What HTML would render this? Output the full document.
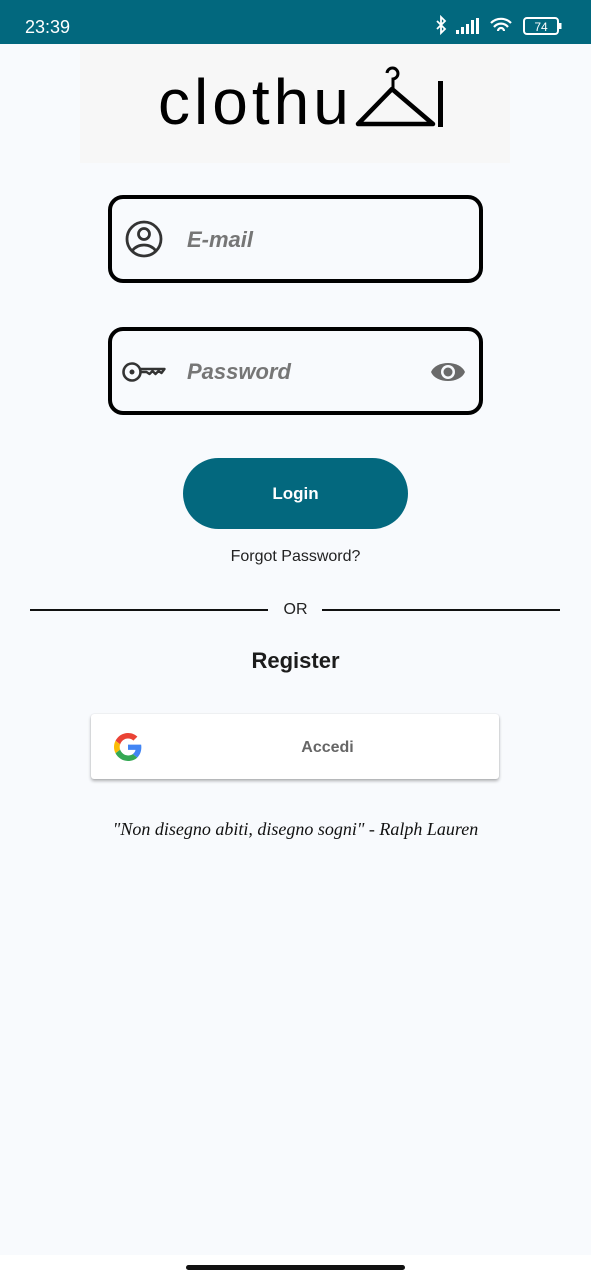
<!DOCTYPE html>
<html><head><meta charset="utf-8"><style>
*{margin:0;padding:0;box-sizing:border-box}
body{width:591px;height:1280px;background:#f8fafd;font-family:"Liberation Sans",Roboto,sans-serif;position:relative;overflow:hidden}
.a{position:absolute}
.sb{left:0;top:0;width:591px;height:44px;background:#02687e;color:#fff}
.field{left:108px;width:375px;height:88px;border:4px solid #000;border-radius:15px}
.ph{font-size:22px;font-weight:bold;font-style:italic;color:#767676}
</style></head><body>
<div class="a sb">
<div class="a" style="left:25px;top:17px;font-size:18px;">23:39</div>
<svg class="a" style="left:434px;top:15px" width="130" height="22" viewBox="0 0 130 22">
<path d="M3 6l8 8-4 4V2l4 4-8 8" fill="none" stroke="#fff" stroke-width="1.8"/>
<rect x="22" y="15" width="3" height="4" fill="#fff"/><rect x="27" y="12" width="3" height="7" fill="#fff"/><rect x="32" y="9" width="3" height="10" fill="#fff"/><rect x="37" y="5" width="3" height="14" fill="#fff"/><rect x="42" y="3" width="3" height="16" fill="#fff"/>
<path d="M57 8a14 14 0 0 1 20 0M60 12a9 9 0 0 1 14 0M64 16a3 3 0 0 1 6 0" fill="none" stroke="#fff" stroke-width="2.2"/>
<rect x="90" y="3" width="34" height="16" rx="3" fill="none" stroke="#fff" stroke-width="2"/>
<rect x="125" y="8" width="2.5" height="6" fill="#fff"/>
<text x="107" y="16" font-size="12" fill="#fff" text-anchor="middle" font-family="Liberation Sans">74</text>
</svg>
</div>
<div class="a" style="left:80px;top:44px;width:430px;height:119px;background:#f7f7f7"></div>
<div class="a" style="left:158px;top:65px;font-size:64px;line-height:74px;color:#000;letter-spacing:4px">clothu</div>
<svg class="a" style="left:326px;top:64px" width="122" height="66" viewBox="0 0 122 66">
<path d="M61 9a5.5 5.5 0 1 1 6 6v10" fill="none" stroke="#000" stroke-width="3"/>
<path d="M66 25L32 60h75z" fill="none" stroke="#000" stroke-width="4.5" stroke-linejoin="round"/>
<rect x="112" y="17" width="5" height="46" fill="#000"/>
</svg>
<div class="a field" style="top:195px"></div>
<svg class="a" style="left:124px;top:219px" width="40" height="40" viewBox="0 0 40 40"><circle cx="20" cy="20" r="17" fill="none" stroke="#333" stroke-width="2.8"/><circle cx="20" cy="15" r="5.5" fill="none" stroke="#333" stroke-width="2.8"/><path d="M8 32c6-8 18-8 24 0" fill="none" stroke="#333" stroke-width="2.8"/></svg>
<div class="a ph" style="left:187px;top:227px">E-mail</div>
<div class="a field" style="top:327px"></div>
<svg class="a" style="left:121px;top:360px" width="48" height="24" viewBox="0 0 48 24"><circle cx="11" cy="12" r="8.5" fill="none" stroke="#333" stroke-width="2.6"/><circle cx="11" cy="12" r="2.5" fill="#333"/><path d="M19.5 9h24l-3 4-3-2-3 3-3-3-3 3-3-2h-6" fill="none" stroke="#333" stroke-width="2.4" stroke-linejoin="round"/></svg>
<div class="a ph" style="left:187px;top:359px">Password</div>
<svg class="a" style="left:430px;top:359px" width="36" height="26" viewBox="0 0 36 26"><path d="M1 13C6 1 30 1 35 13C30 25 6 25 1 13z" fill="#6a6a6a"/><circle cx="18" cy="13" r="7" fill="#f8fafd"/><circle cx="18" cy="13" r="4.5" fill="#6a6a6a"/></svg>
<div class="a" style="left:183px;top:458px;width:225px;height:71px;border-radius:36px;background:#03687e;color:#fff;font-weight:bold;font-size:17px;text-align:center;line-height:71px">Login</div>
<div class="a" style="left:0;width:591px;top:548px;text-align:center;font-size:16px;color:#222">Forgot Password?</div>
<div class="a" style="left:30px;top:609px;width:238px;height:1.5px;background:#111"></div>
<div class="a" style="left:322px;top:609px;width:238px;height:1.5px;background:#111"></div>
<div class="a" style="left:0;width:591px;top:601px;text-align:center;font-size:16px;color:#222">OR</div>
<div class="a" style="left:0;width:591px;top:648px;text-align:center;font-size:22px;font-weight:bold;color:#1c1c1c">Register</div>
<div class="a" style="left:91px;top:714px;width:408px;height:65px;background:#fff;border-radius:3px;box-shadow:0 2px 3px rgba(0,0,0,.3),0 0 1px rgba(0,0,0,.15)"></div>
<svg class="a" style="left:114px;top:733px" width="28" height="28" viewBox="0 0 48 48"><path fill="#EA4335" d="M24 9.5c3.5 0 6.7 1.2 9.2 3.6l6.9-6.9C35.9 2.4 30.5 0 24 0 14.6 0 6.6 5.4 2.6 13.3l8 6.2C12.5 13.7 17.8 9.5 24 9.5z"/><path fill="#4285F4" d="M46.9 24.5c0-1.6-.1-3.1-.4-4.5H24v9h12.9c-.6 3-2.3 5.5-4.8 7.2l7.7 6c4.5-4.2 7.1-10.3 7.1-17.7z"/><path fill="#FBBC05" d="M10.5 28.6c-.5-1.4-.8-3-.8-4.6s.3-3.2.8-4.6l-8-6.2C.9 16.5 0 20.1 0 24s.9 7.5 2.6 10.7l7.9-6.1z"/><path fill="#34A853" d="M24 48c6.5 0 11.9-2.1 15.9-5.8l-7.7-6c-2.2 1.5-5 2.3-8.2 2.3-6.2 0-11.5-4.2-13.4-9.9l-8 6.2C6.6 42.6 14.6 48 24 48z"/></svg>
<div class="a" style="left:280px;top:739px;width:95px;text-align:center;font-size:16px;font-weight:bold;color:#666">Accedi</div>
<div class="a" style="left:0;width:591px;top:819px;text-align:center;font-family:'Liberation Serif',serif;font-style:italic;font-size:18px;color:#111">"Non disegno abiti, disegno sogni" - Ralph Lauren</div>
<div class="a" style="left:0;top:1255px;width:591px;height:25px;background:#fff"></div>
<div class="a" style="left:186px;top:1265px;width:219px;height:5px;border-radius:3px;background:#111"></div>
</body></html>
